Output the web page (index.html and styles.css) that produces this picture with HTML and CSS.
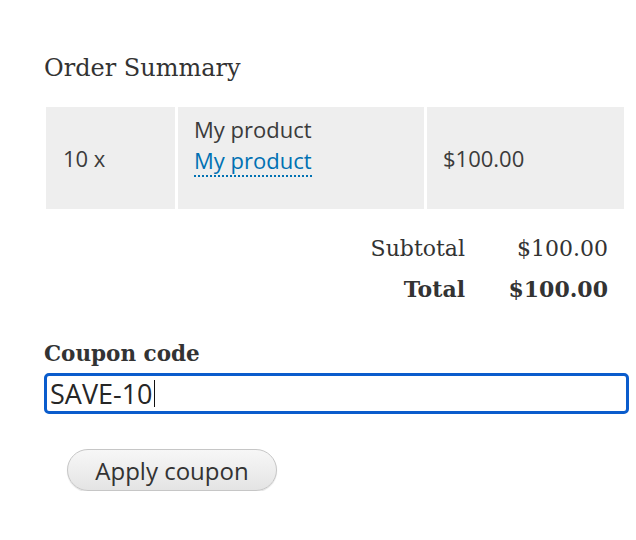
FILE: index.html
```html
<!DOCTYPE html>
<html>
<head>
<meta charset="utf-8">
<link rel="stylesheet" href="styles.css">
</head>
<body>
<div class="page">
  <h2 class="title">Order Summary</h2>
  <div class="items">
    <div class="cell qty">10 x</div>
    <div class="cell prod"><div>My product</div><div><a href="#" class="plink">My product</a></div></div>
    <div class="cell price">$100.00</div>
  </div>
  <div class="totals">
    <div class="trow"><span class="tlabel">Subtotal</span><span class="tval">$100.00</span></div>
    <div class="trow bold"><span class="tlabel">Total</span><span class="tval">$100.00</span></div>
  </div>
  <div class="coupon">
    <label class="clabel">Coupon code</label>
    <div class="cinput"><span class="ctext">SAVE-10</span><span class="caret"></span></div>
    <button class="btn">Apply coupon</button>
  </div>
</div>
</body>
</html>
```
FILE: styles.css
```css
html, body { margin: 0; padding: 0; background: #fff; }
.page { padding: 51px 8px 0 44px; color: #3b3b3b; font-family: "Open Sans", sans-serif; }
.title { margin: 0; font-family: "DejaVu Serif", serif; font-weight: normal; font-size: 24px; line-height: 34px; color: #333; }
.items { margin: 22px 0 0 2px; display: grid; grid-template-columns: 129px 246px 197px; column-gap: 3px; height: 102px; }
.cell { background: #eeeeee; font-size: 22px; display: flex; align-items: center; }
.qty { padding-left: 17px; }
.price { padding-left: 16px; }
.prod { padding: 7px 0 0 16px; line-height: 31px; flex-direction: column; align-items: flex-start; }
.plink { color: #0071b3; text-decoration: none; border-bottom: 2px dotted #0071b3; }
.totals { margin-top: 20px; width: 564px; font-family: "DejaVu Serif", serif; font-size: 22px; color: #333; }
.trow { display: flex; justify-content: flex-end; line-height: 40px; }
.tval { width: 143px; text-align: right; }
.bold { font-weight: bold; }
.coupon { margin-top: 31px; }
.clabel { display: block; font-family: "DejaVu Serif", serif; font-weight: bold; font-size: 21.5px; color: #333; line-height: 28px; }
.cinput { margin-top: 5px; width: 576px; height: 35px; border: 3px solid #0a5ccc; border-radius: 5px; display: flex; align-items: center; padding-left: 3px; font-size: 27px; color: #262626; }
.caret { display: inline-block; width: 1px; height: 27px; background: #111; margin-left: 1px; }
.btn { display: block; margin: 35px 0 0 23px; width: 210px; height: 42px; border: 1px solid #c6c6c6; border-radius: 21px; background: linear-gradient(#f7f7f7, #e4e4e4); font-family: "Open Sans", sans-serif; font-size: 24px; color: #333; box-shadow: 0 1px 1px rgba(0,0,0,0.12); padding: 0; }
```
